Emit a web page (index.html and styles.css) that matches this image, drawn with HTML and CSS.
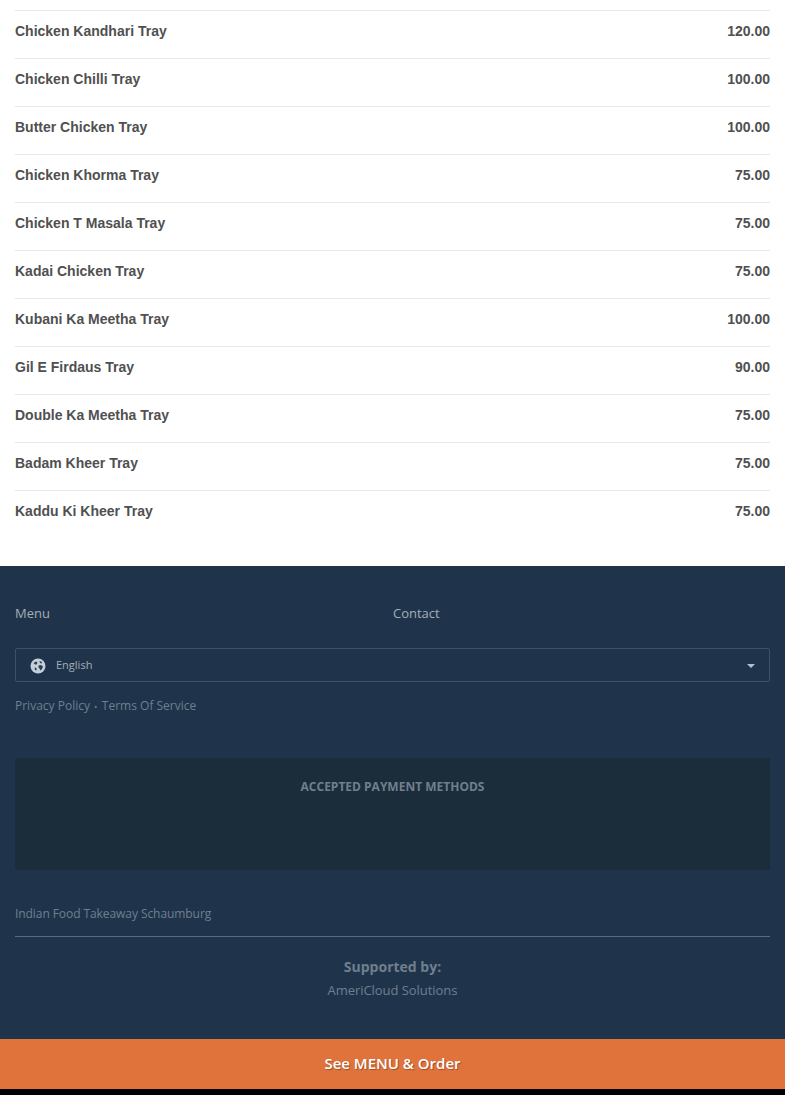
FILE: index.html
```html
<!DOCTYPE html>
<html lang="en">
<head>
    <meta charset="UTF-8">
    <meta name="viewport" content="width=device-width, initial-scale=1.0">
    <title>Indian Food Takeaway Schaumburg</title>
    <link rel="stylesheet" href="styles.css">
</head>
<body>
    <!-- Tray list -->
    <ul class="menu-list">
        <li class="menu-item"><span>Chicken Kandhari Tray</span><span>120.00</span></li>
        <li class="menu-item"><span>Chicken Chilli Tray</span><span>100.00</span></li>
        <li class="menu-item"><span>Butter Chicken Tray</span><span>100.00</span></li>
        <li class="menu-item"><span>Chicken Khorma Tray</span><span>75.00</span></li>
        <li class="menu-item"><span>Chicken T Masala Tray</span><span>75.00</span></li>
        <li class="menu-item"><span>Kadai Chicken Tray</span><span>75.00</span></li>
        <li class="menu-item"><span>Kubani Ka Meetha Tray</span><span>100.00</span></li>
        <li class="menu-item"><span>Gil E Firdaus Tray</span><span>90.00</span></li>
        <li class="menu-item"><span>Double Ka Meetha Tray</span><span>75.00</span></li>
        <li class="menu-item"><span>Badam Kheer Tray</span><span>75.00</span></li>
        <li class="menu-item"><span>Kaddu Ki Kheer Tray</span><span>75.00</span></li>
    </ul>

    <footer class="site-footer">
        <div class="footer-links">
            <a class="footer-link">Menu</a>
            <a class="footer-link">Contact</a>
        </div>

        <div class="lang-select">
            <svg class="globe" width="16" height="16" viewBox="0 0 16 16">
                <circle cx="8" cy="8" r="7.5" fill="#c4ced7"/>
                <path d="M3.5 5 L6 3.5 L7.5 4.5 L6.5 6.5 L5 6.5 Z" fill="#2a3f55"/>
                <path d="M9.5 3 L12 4 L11.5 5.5 L10 5 Z" fill="#2a3f55"/>
                <path d="M8.5 7.5 L11 7 L13 8.5 L12 11 L10.5 12.5 L9.5 10.5 L8.5 9.5 Z" fill="#2a3f55"/>
                <path d="M4.5 9.5 L6.5 10 L6.5 12.5 L5 12 Z" fill="#2a3f55"/>
            </svg>
            <span class="lang-name">English</span>
            <span class="caret"></span>
        </div>

        <p class="legal"><a>Privacy Policy</a><span class="dot">•</span><a>Terms Of Service</a></p>

        <div class="payment-box">
            <h4>ACCEPTED PAYMENT METHODS</h4>
        </div>

        <p class="tagline">Indian Food Takeaway Schaumburg</p>

        <div class="supported">
            <strong>Supported by:</strong>
            <a>AmeriCloud Solutions</a>
        </div>
    </footer>

    <a class="order-bar">See MENU &amp; Order</a>
    <div class="bottom-strip"></div>
</body>
</html>
```

FILE: styles.css
```css
* {
    margin: 0;
    padding: 0;
    box-sizing: border-box;
}

body {
    font-family: "Open Sans", sans-serif;
    background: #fff;
    overflow-x: hidden;
}

/* Tray list */
.menu-list {
    list-style: none;
    margin: 10px 15px 0;
    padding-bottom: 28px;
}

.menu-item {
    display: flex;
    justify-content: space-between;
    height: 48px;
    padding-top: 12px;
    border-top: 1px solid #e8e8e8;
    font-family: "Liberation Sans", Arial, sans-serif;
    font-size: 14px;
    line-height: 17px;
    font-weight: bold;
    color: #505050;
}

/* Footer */
.site-footer {
    background: #1f344b;
    padding: 38px 15px 0;
    height: 473px;
    color: #7a8997;
}

.footer-links {
    display: grid;
    grid-template-columns: 378px 1fr;
    font-size: 13px;
    line-height: 18px;
    color: #a3aeb8;
}

.lang-select {
    display: flex;
    align-items: center;
    height: 34px;
    margin-top: 26px;
    padding: 0 14px;
    border: 1px solid #3d5164;
    border-radius: 2px;
    color: #a3aeb8;
    font-size: 11px;
}

.globe {
    flex: none;
    margin-top: 2px;
}

.lang-name {
    flex: 1;
    margin-left: 10px;
    margin-bottom: 2px;
}

.caret {
    width: 0;
    height: 0;
    margin-top: 2px;
    border-left: 4px solid transparent;
    border-right: 4px solid transparent;
    border-top: 4px solid #b4c0cb;
}

.legal {
    margin-top: 15px;
    font-size: 12px;
    line-height: 17px;
    color: #6f7f8e;
}

.dot {
    margin: 0 4px;
    font-size: 9px;
    letter-spacing: 0.5px;
}

.payment-box {
    height: 112px;
    margin-top: 43px;
    padding-top: 20px;
    background: #1b2c3b;
    border-radius: 2px;
    text-align: center;
}

.payment-box h4 {
    font-size: 12px;
    line-height: 17px;
    font-weight: bold;
    color: #6f7f8e;
}

.tagline {
    margin-top: 35px;
    padding-bottom: 13px;
    border-bottom: 1px solid #5a6b7a;
    font-size: 12px;
    line-height: 18px;
    letter-spacing: -0.07px;
    color: #6f7f8e;
}

.supported {
    margin-top: 20px;
    text-align: center;
    color: #6f7f8e;
}

.supported strong {
    display: block;
    font-size: 14px;
    line-height: 20px;
    font-weight: bold;
}

.supported a {
    display: block;
    margin-top: 4px;
    font-size: 13px;
    line-height: 18px;
    letter-spacing: -0.05px;
}

/* Order bar */
.order-bar {
    display: block;
    height: 50px;
    background: #e0723b;
    color: #fff;
    text-align: center;
    font-size: 15px;
    line-height: 49px;
    font-weight: 600;
    text-shadow: 1px 1px 1px rgba(0, 0, 0, 0.3);
}

.bottom-strip {
    height: 6px;
    background: #000;
}
```
